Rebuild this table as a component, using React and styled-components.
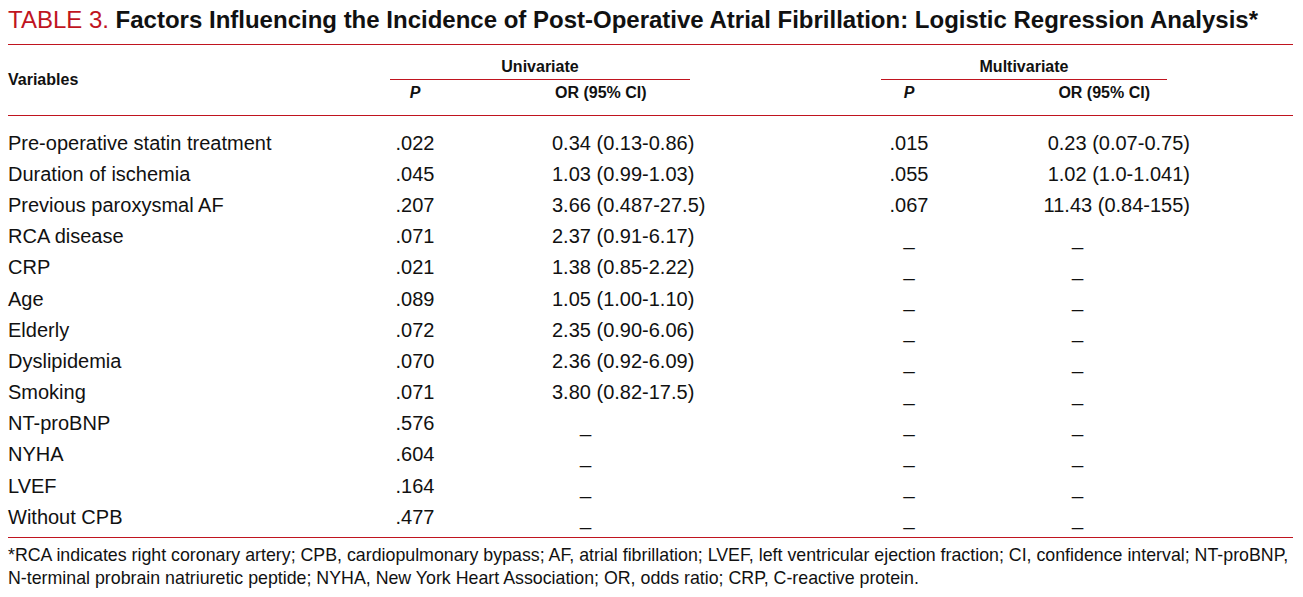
import React from 'react';
import styled, { createGlobalStyle } from 'styled-components';

const RED = '#c0141f';

const GlobalStyle = createGlobalStyle`
  html, body {
    margin: 0;
    padding: 0;
    background: #fff;
  }
  body {
    font-family: "Liberation Sans", Arial, sans-serif;
    color: #111;
  }
`;

// univariate + multivariate rows of the table
const rows = [
  { name: 'Pre-operative statin treatment', uniP: '.022', uniOr: '0.34 (0.13-0.86)', multiP: '.015', multiOr: '0.23 (0.07-0.75)' },
  { name: 'Duration of ischemia', uniP: '.045', uniOr: '1.03 (0.99-1.03)', multiP: '.055', multiOr: '1.02 (1.0-1.041)' },
  { name: 'Previous paroxysmal AF', uniP: '.207', uniOr: '3.66 (0.487-27.5)', multiP: '.067', multiOr: '11.43 (0.84-155)' },
  { name: 'RCA disease', uniP: '.071', uniOr: '2.37 (0.91-6.17)' },
  { name: 'CRP', uniP: '.021', uniOr: '1.38 (0.85-2.22)' },
  { name: 'Age', uniP: '.089', uniOr: '1.05 (1.00-1.10)' },
  { name: 'Elderly', uniP: '.072', uniOr: '2.35 (0.90-6.06)' },
  { name: 'Dyslipidemia', uniP: '.070', uniOr: '2.36 (0.92-6.09)' },
  { name: 'Smoking', uniP: '.071', uniOr: '3.80 (0.82-17.5)' },
  { name: 'NT-proBNP', uniP: '.576' },
  { name: 'NYHA', uniP: '.604' },
  { name: 'LVEF', uniP: '.164' },
  { name: 'Without CPB', uniP: '.477' }
];

// column widths: variables | uni P | gap | uni OR | gap | multi P | multi OR | rest
const COLUMNS = '382px 50px 112px 148px 184px 50px 256px 1fr';

const App = () => {
  return (
    <>
      <GlobalStyle />
      <Page>
        <Caption>
          <Label>TABLE 3.</Label> Factors Influencing the Incidence of Post-Operative Atrial Fibrillation: Logistic Regression Analysis*
        </Caption>

        <Head>
          <VarHead>Variables</VarHead>
          <GroupHead $from={2} $to={5} $right={10}>Univariate</GroupHead>
          <GroupHead $from={6} $to={8} $left={-3} $right={23}>Multivariate</GroupHead>
          <SubHead $col={2} $align="center"><i>P</i></SubHead>
          <SubHead $col={4} $pad="0 0 0 3px">OR (95% CI)</SubHead>
          <SubHead $col={6} $align="center"><i>P</i></SubHead>
          <SubHead $col={7} $align="right" $pad="0 40px 0 0">OR (95% CI)</SubHead>
        </Head>

        <Body>
          {rows.map((r) => (
            <Row key={r.name}>
              <Cell $col={1}>{r.name}</Cell>
              <Cell $col={2} $align="center">{r.uniP}</Cell>
              <Cell $col={4}>{r.uniOr || <Dash $shift="0 0 0 28px">_</Dash>}</Cell>
              <Cell $col={6} $align="center">{r.multiP || <Dash>_</Dash>}</Cell>
              <Cell $col={7} $align="right">
                {r.multiOr || <Dash $shift="0 107px 0 0">_</Dash>}
              </Cell>
            </Row>
          ))}
        </Body>

        <Footnote>
          *RCA indicates right coronary artery; CPB, cardiopulmonary bypass; AF, atrial fibrillation; LVEF, left ventricular ejection fraction; CI, confidence interval; NT-proBNP,
          <br />
          N-terminal probrain natriuretic peptide; NYHA, New York Heart Association; OR, odds ratio; CRP, C-reactive protein.
        </Footnote>
      </Page>
    </>
  );
};

const Page = styled.div`
  width: 1285px;
  margin: 0 8px;
  display: flex;
  flex-direction: column;
`;

const Caption = styled.div`
  margin-top: 6px;
  padding-bottom: 10px;
  font-size: 24px;
  line-height: 28px;
  font-weight: 700;
  white-space: nowrap;
  border-bottom: 1px solid ${RED};
`;

const Label = styled.span`
  color: ${RED};
  font-weight: 400;
`;

const Head = styled.div`
  display: grid;
  grid-template-columns: ${COLUMNS};
  grid-template-rows: 35px 35px;
  font-size: 16px;
  font-weight: 700;
  border-bottom: 1px solid ${RED};
`;

const VarHead = styled.div`
  grid-column: 1;
  grid-row: 1 / 3;
  align-self: center;
`;

const GroupHead = styled.div`
  grid-column: ${(p) => p.$from} / ${(p) => p.$to};
  grid-row: 1;
  margin-left: ${(p) => p.$left || 0}px;
  margin-right: ${(p) => p.$right || 0}px;
  text-align: center;
  line-height: 20px;
  padding-top: 12px;
  border-bottom: 1px solid ${RED};
  padding-bottom: 2px;
  align-self: start;
  height: 20px;
`;

const SubHead = styled.div`
  grid-column: ${(p) => p.$col};
  grid-row: 2;
  text-align: ${(p) => p.$align || 'left'};
  padding: ${(p) => p.$pad || 0};
  line-height: 20px;
  margin-top: 3px;
`;

const Body = styled.div`
  display: flex;
  flex-direction: column;
  padding: 11px 0 5px;
  border-bottom: 1px solid ${RED};
`;

const Row = styled.div`
  display: grid;
  grid-template-columns: ${COLUMNS};
  height: 31.2px;
  align-items: center;
  font-size: 20px;
`;

const Cell = styled.div`
  grid-column: ${(p) => p.$col};
  text-align: ${(p) => p.$align || 'left'};
  white-space: nowrap;
  line-height: 24px;
`;

const Dash = styled.span`
  display: inline-block;
  vertical-align: -3px;
  margin: ${(p) => p.$shift || 0};
`;

const Footnote = styled.div`
  padding-top: 6px;
  font-size: 17.8px;
  line-height: 23px;
  white-space: nowrap;
`;

export default App;
